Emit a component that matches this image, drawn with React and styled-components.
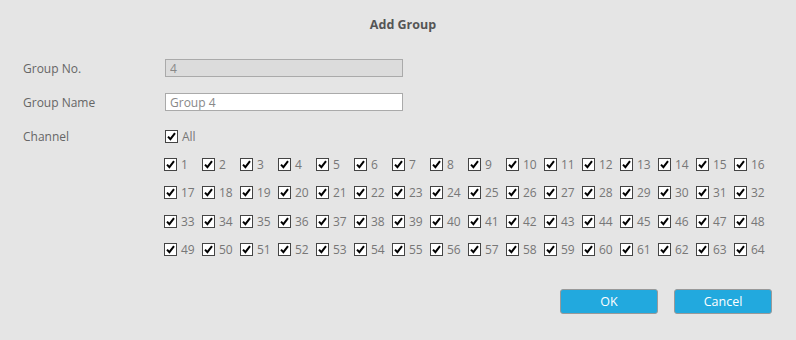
import React from "react";
import styled, { createGlobalStyle } from "styled-components";

const GlobalStyle = createGlobalStyle`
  body {
    margin: 0;
    background: #e5e5e5;
    font-family: "Open Sans", "Noto Sans", sans-serif;
  }
`;

const channels = Array.from({ length: 64 }, (_, i) => i + 1);

const CheckIcon = () => (
  <svg width="9" height="9" viewBox="0 0 9 9">
    <path d="M1 4.6 L3.4 7.2 L8 1.2" fill="none" stroke="#000" strokeWidth="2" />
  </svg>
);

const Check = ({ label }) => (
  <CheckItem>
    <Box>
      <CheckIcon />
    </Box>
    <span>{label}</span>
  </CheckItem>
);

const App = () => {
  return (
    <Page>
      <GlobalStyle />
      <Title>Add Group</Title>
      <Form>
        <Label>Group No.</Label>
        <Input value="4" disabled readOnly />
        <Label>Group Name</Label>
        <Input defaultValue="Group 4" />
        <Label>Channel</Label>
        <Check label="All" />
      </Form>
      <Channels>
        {channels.map((n) => (
          <Check key={n} label={n} />
        ))}
      </Channels>
      <Buttons>
        <Button>OK</Button>
        <Button>Cancel</Button>
      </Buttons>
    </Page>
  );
};

export default App;

const Page = styled.div`
  width: 796px;
  height: 340px;
  box-sizing: border-box;
  padding-top: 16px;
  color: #666;
  font-size: 12px;
`;

const Title = styled.div`
  text-align: center;
  font-weight: bold;
  font-size: 12.5px;
  color: #555;
  height: 18px;
  line-height: 18px;
  padding-left: 10px;
`;

const Form = styled.div`
  display: grid;
  grid-template-columns: 142px 238px;
  grid-auto-rows: 18px;
  row-gap: 16px;
  align-items: center;
  padding: 25px 0 0 23px;
`;

const Label = styled.div`
  color: #666;
  font-size: 12px;
`;

const Input = styled.input`
  box-sizing: border-box;
  width: 238px;
  height: 18px;
  margin: 0;
  padding: 0 4px;
  border: 1px solid #aaa;
  background: ${(p) => (p.disabled ? "#dcdcdc" : "#fff")};
  color: #888;
  font-family: inherit;
  font-size: 12px;
  outline: none;
`;

const CheckItem = styled.div`
  display: flex;
  align-items: center;
  gap: 4px;
  height: 18px;
  color: #777;
  font-size: 12px;
`;

const Box = styled.span`
  box-sizing: border-box;
  width: 13px;
  height: 13px;
  border: 1px solid #444;
  background: #fff;
  display: flex;
  align-items: center;
  justify-content: center;
`;

const Channels = styled.div`
  display: grid;
  grid-template-columns: repeat(16, 38px);
  grid-auto-rows: 18px;
  row-gap: 10.5px;
  padding: 10px 0 0 164px;
`;

const Buttons = styled.div`
  display: flex;
  justify-content: flex-end;
  gap: 16px;
  padding: 30px 24px 0 0;
`;

const Button = styled.button`
  box-sizing: border-box;
  width: 98px;
  height: 25px;
  border: 1px solid #999;
  border-radius: 3px;
  background: #22a9de;
  color: #fff;
  font-family: inherit;
  font-size: 12.5px;
  padding: 0;
`;
